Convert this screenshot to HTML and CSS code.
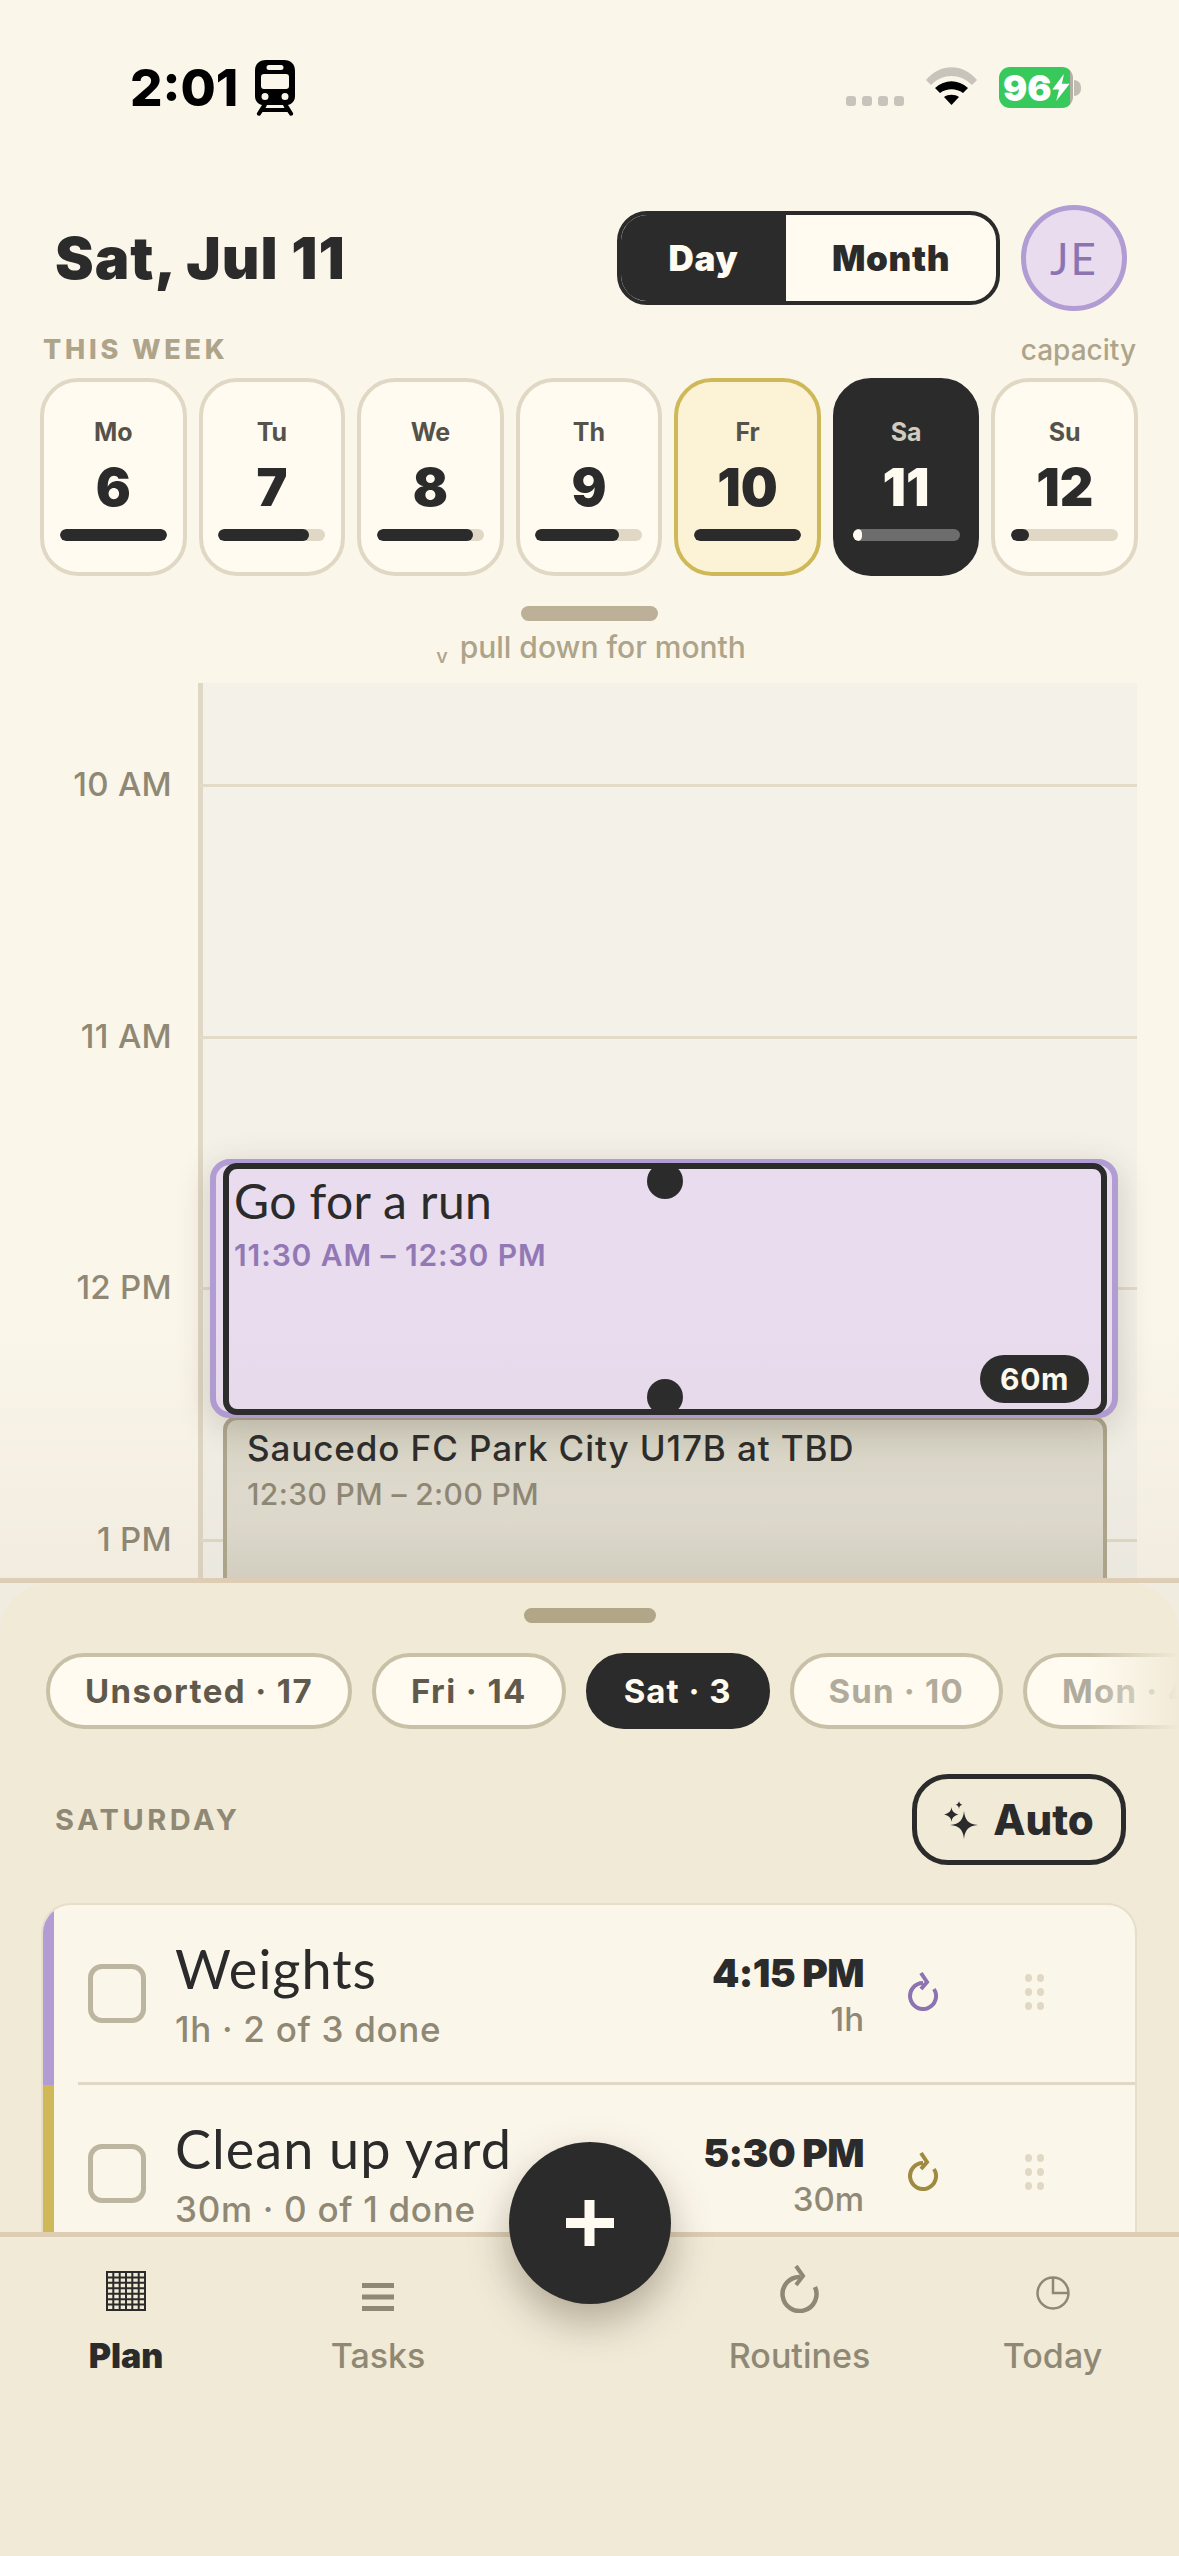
FILE: index.html
```html
<!DOCTYPE html>
<html lang="en">
<head>
  <meta charset="UTF-8" />
  <meta name="viewport" content="width=device-width, initial-scale=1.0" />
  <title>Plan</title>
  <link rel="stylesheet" href="styles.css">
</head>
<body>
  <div class="app">
    <div class="status">
      <div class="status-left">
        <span class="clock">2:01</span>
        <svg class="train" viewBox="0 0 40 56">
          <path fill="#000" fill-rule="evenodd" d="M11 0h18c7 0 11 4 11 11v25c0 5-3 8-7 9l5 8c1 2-2 4-3.500 2l-2-3H7.500l-2 3C4 57 1 55 2 53l5-8c-4-1-7-4-7-9V11C0 4 4 0 11 0zM14 5a2 2 0 0 0 0 5h12a2 2 0 0 0 0-5zM9 14c-2 0-3 1-3 3v9c0 2 1 3 3 3h22c2 0 3-1 3-3v-9c0-2-1-3-3-3zM10 33a3.500 3.500 0 1 0 0 7 3.500 3.500 0 0 0 0-7zM30 33a3.500 3.500 0 1 0 0 7 3.500 3.500 0 0 0 0-7zM12 45l-1.500 3h19L28 45z"/>
        </svg>
      </div>
      <div class="status-right">
        <div class="signal"><i></i><i></i><i></i><i></i></div>
        <svg class="wifi" viewBox="0 0 51 38">
          <path fill="#c9c4bb" d="M0 13C14 -4 37 -4 51 13l-5 5C34 6 17 6 5 18z"/>
          <path fill="#000" d="M9 21c10-9 23-9 33 0l-5 5c-7-5-16-5-23 0z"/>
          <path fill="#000" d="M18 30c4-3 11-3 15 0l-7.500 8z"/>
        </svg>
        <div class="battery">
          <div class="battery-fill">
            <span>96</span>
            <svg class="bolt" viewBox="0 0 18 28"><path fill="#fff" d="M12 0L0 16h7L4 28 18 10h-8z"/></svg>
          </div>
          <div class="battery-tip"></div>
        </div>
      </div>
    </div>

    <header class="top">
      <h1>Sat, Jul 11</h1>
      <div class="top-right">
        <div class="toggle">
          <span class="toggle-on">Day</span>
          <span class="toggle-off">Month</span>
        </div>
        <div class="avatar">JE</div>
      </div>
    </header>

    <div class="week-head">
      <span class="week-title">THIS WEEK</span>
      <span class="week-cap">capacity</span>
    </div>

    <div class="week">
      <div class="day"><span class="day-name">Mo</span><span class="day-num">6</span><div class="bar"><div class="bar-fill" style="width:100%"></div></div></div>
      <div class="day"><span class="day-name">Tu</span><span class="day-num">7</span><div class="bar"><div class="bar-fill" style="width:85%"></div></div></div>
      <div class="day"><span class="day-name">We</span><span class="day-num">8</span><div class="bar"><div class="bar-fill" style="width:90%"></div></div></div>
      <div class="day"><span class="day-name">Th</span><span class="day-num">9</span><div class="bar"><div class="bar-fill" style="width:78%"></div></div></div>
      <div class="day day-today"><span class="day-name">Fr</span><span class="day-num">10</span><div class="bar"><div class="bar-fill" style="width:100%"></div></div></div>
      <div class="day day-selected"><span class="day-name">Sa</span><span class="day-num">11</span><div class="bar"><div class="bar-fill" style="width:9%"></div></div></div>
      <div class="day"><span class="day-name">Su</span><span class="day-num">12</span><div class="bar"><div class="bar-fill" style="width:17%"></div></div></div>
    </div>

    <div class="pull">
      <div class="pull-handle"></div>
      <div class="pull-text"><small>v</small>pull down for month</div>
    </div>

    <div class="timeline">
      <div class="canvas"></div>
      <div class="hours">
        <div class="hour"><span>10 AM</span><div class="hour-line"></div></div>
        <div class="hour"><span>11 AM</span><div class="hour-line"></div></div>
        <div class="hour"><span>12 PM</span><div class="hour-line"></div></div>
        <div class="hour"><span>1 PM</span><div class="hour-line"></div></div>
      </div>

      <div class="event-busy">
        <div class="busy-title">Saucedo FC Park City U17B at TBD</div>
        <div class="busy-time">12:30 PM – 2:00 PM</div>
      </div>

      <div class="event-ring">
        <div class="event-sel">
          <div class="event-title hand">Go for a run</div>
          <div class="event-time">11:30 AM – 12:30 PM</div>
          <div class="grab grab-top"></div>
          <div class="grab grab-bottom"></div>
          <div class="event-len">60m</div>
        </div>
      </div>
      <div class="timeline-fade"></div>
    </div>

    <section class="sheet">
      <div class="sheet-inner">
        <div class="sheet-handle"></div>
        <div class="chips">
          <span class="chip">Unsorted · 17</span>
          <span class="chip">Fri · 14</span>
          <span class="chip chip-on">Sat · 3</span>
          <span class="chip chip-dim">Sun · 10</span>
          <span class="chip chip-dim">Mon · 4</span>
        </div>
        <div class="list-head">
          <span class="list-title">SATURDAY</span>
          <div class="auto">
            <svg class="sparkle" viewBox="0 0 34 38">
              <path fill="#2b2b2b" d="M20 10c1 9 4 13 14 14-10 1-13 5-14 14-1-9-4-13-14-14 10-1 13-5 14-14z"/>
              <path fill="#2b2b2b" d="M7.500 6c.5 4 2 6 7 7.500-5 1.500-6.500 3.500-7 7.500-.5-4-2-6-7.500-7.500C5.500 12 7 10 7.500 6z"/>
              <path fill="#2b2b2b" d="M15 0c.3 2 1 3 3.500 3.800C16 4.500 15.300 5.500 15 8c-.3-2.500-1-3.500-3.500-4.200C14 3 14.700 2 15 0z"/>
            </svg>
            <span>Auto</span>
          </div>
        </div>
        <div class="list">
          <div class="row row-purple">
            <div class="row-body">
              <div class="check"></div>
              <div class="row-main">
                <div class="row-title hand">Weights</div>
                <div class="row-sub">1h · 2 of 3 done</div>
              </div>
              <div class="row-when">
                <div class="row-time">4:15 PM</div>
                <div class="row-len">1h</div>
              </div>
              <svg class="repeat repeat-purple" viewBox="0 0 34 40"><path d="M27 18A13 13 0 1 1 16 12"/><path d="M14 2l6 9-6 7"/></svg>
              <div class="grip"><i></i><i></i><i></i><i></i><i></i><i></i></div>
            </div>
          </div>
          <div class="row row-yellow">
            <div class="row-body">
              <div class="check"></div>
              <div class="row-main">
                <div class="row-title hand">Clean up yard</div>
                <div class="row-sub">30m · 0 of 1 done</div>
              </div>
              <div class="row-when">
                <div class="row-time">5:30 PM</div>
                <div class="row-len">30m</div>
              </div>
              <svg class="repeat repeat-gold" viewBox="0 0 34 40"><path d="M27 18A13 13 0 1 1 16 12"/><path d="M14 2l6 9-6 7"/></svg>
              <div class="grip"><i></i><i></i><i></i><i></i><i></i><i></i></div>
            </div>
          </div>
        </div>
      </div>
    </section>

    <nav class="nav">
      <div class="tab tab-on">
        <svg class="tab-icon" viewBox="0 0 40 40">
          <path fill="none" stroke="#2b2b2b" stroke-width="2" d="M1 1h38v38H1zM7.300 1v38M13.700 1v38M20 1v38M26.300 1v38M32.700 1v38M1 6.400h38M1 11.800h38M1 17.200h38M1 22.800h38M1 28.200h38M1 33.600h38"/>
        </svg>
        <span>Plan</span>
      </div>
      <div class="tab">
        <svg class="tab-icon" viewBox="0 0 40 40">
          <path fill="#8f8875" d="M4 12h32v5H4zM4 23.500h32v5H4zM4 35h32v5H4z"/>
        </svg>
        <span>Tasks</span>
      </div>
      <div class="tab-gap"></div>
      <div class="tab">
        <svg class="tab-icon tab-icon-big" viewBox="0 0 44 48">
          <path fill="none" stroke="#8f8875" stroke-width="4.500" d="M37 22A17 17 0 1 1 22 12"/>
          <path fill="none" stroke="#8f8875" stroke-width="4" d="M18 1l7 10-7 9"/>
        </svg>
        <span>Routines</span>
      </div>
      <div class="tab">
        <svg class="tab-icon" viewBox="0 0 40 40">
          <path fill="none" stroke="#8f8875" stroke-width="2.500" d="M20 6.500a15.500 15.500 0 1 0 0 31 15.500 15.500 0 0 0 0-31zM20 6.500V22h15.500"/>
        </svg>
        <span>Today</span>
      </div>
    </nav>

    <div class="fab">
      <svg viewBox="0 0 48 46"><path fill="#fffbf0" d="M18.500 0h10v18H48v10H28.500v18h-10V28H0V18h18.500z"/></svg>
    </div>
  </div>
</body>
</html>
```

FILE: styles.css
```css
* {
  box-sizing: border-box;
}

body {
  margin: 0;
  font-family: Inter, "Liberation Sans", sans-serif;
  color: #2b2b2b;
  background: #fbf6ea;
}

.app {
  position: relative;
  width: 1179px;
  height: 2556px;
  overflow: hidden;
  display: flex;
  flex-direction: column;
}

.hand {
  font-family: Lato, "Open Sans", sans-serif;
  font-weight: 400;
}

/* status bar */
.status {
  height: 205px;
  flex: none;
  display: flex;
  justify-content: space-between;
  align-items: flex-start;
  padding: 60px 98px 0 130px;
}

.status-left {
  display: flex;
  align-items: center;
  gap: 17px;
}

.clock {
  font-size: 51px;
  font-weight: 800;
  color: #000;
  line-height: 56px;
}

.train {
  width: 40px;
  height: 56px;
}

.status-right {
  display: flex;
  align-items: flex-start;
  padding-top: 7px;
}

.signal {
  display: flex;
  gap: 6px;
  margin-top: 29px;
  margin-right: 22px;
}

.signal i {
  width: 10px;
  height: 10px;
  border-radius: 3px;
  background: #c9c4bb;
}

.wifi {
  width: 51px;
  height: 38px;
  margin-right: 22px;
}

.battery {
  display: flex;
  align-items: center;
}

.battery-fill {
  width: 74px;
  height: 41px;
  border-radius: 11px;
  background: linear-gradient(90deg, #37c95c 96%, #b5b0a6 96%);
  display: flex;
  align-items: center;
  justify-content: flex-start;
  gap: 0;
  padding-left: 4px;
  color: #fff;
  font-size: 36px;
  font-weight: 900;
}

.bolt {
  width: 18px;
  height: 27px;
  flex: none;
}

.battery-tip {
  width: 7px;
  height: 16px;
  margin-left: 1px;
  border-radius: 0 8px 8px 0;
  background: #c2bdb3;
}

/* header */
.top {
  height: 106px;
  flex: none;
  display: flex;
  justify-content: space-between;
  align-items: center;
  padding: 0 52px 0 55px;
}

.top h1 {
  margin: 0;
  font-size: 58px;
  font-weight: 900;
  letter-spacing: 1px;
}

.top-right {
  display: flex;
  align-items: center;
  gap: 21px;
}

.toggle {
  width: 383px;
  height: 94px;
  display: flex;
  border: 4px solid #2b2b2b;
  border-radius: 30px;
  overflow: hidden;
  background: #fffbf0;
  font-size: 35px;
  font-weight: 900;
}

.toggle span {
  display: flex;
  align-items: center;
  justify-content: center;
}

.toggle-on {
  width: 165px;
  background: #2b2b2b;
  color: #fffbf0;
  letter-spacing: 0.8px;
}

.toggle-off {
  flex: 1;
  letter-spacing: 0.6px;
}

.avatar {
  width: 106px;
  height: 106px;
  border: 5px solid #b19cd3;
  border-radius: 50%;
  background: #e8dcee;
  color: #8c74b0;
  display: flex;
  align-items: center;
  justify-content: center;
  font-family: Lato, sans-serif;
  font-size: 44px;
  letter-spacing: 2px;
}

/* week strip */
.week-head {
  height: 67px;
  flex: none;
  display: flex;
  justify-content: space-between;
  align-items: flex-end;
  padding: 0 43px 13px 43px;
  color: #ada48a;
}

.week-title {
  font-size: 27px;
  font-weight: 800;
  letter-spacing: 3.800px;
  line-height: 30px;
}

.week-cap {
  font-size: 28px;
  font-weight: 500;
  line-height: 30px;
}

.week {
  height: 198px;
  flex: none;
  display: grid;
  grid-template-columns: repeat(7, 1fr);
  gap: 12px;
  padding: 0 41px 0 40px;
}

.day {
  border: 4px solid #e0d8c4;
  border-radius: 38px;
  background: #fffbf0;
  display: flex;
  flex-direction: column;
  align-items: center;
  padding-top: 35px;
}

.day-name {
  font-size: 25px;
  font-weight: 700;
  line-height: 30px;
  color: #55524a;
}

.day-num {
  font-size: 52px;
  font-weight: 900;
  line-height: 60px;
  margin-top: 11px;
}

.bar {
  width: 107px;
  height: 12px;
  margin-top: 11px;
  border-radius: 6px;
  background: #e0d8c4;
  overflow: hidden;
}

.bar-fill {
  height: 100%;
  border-radius: 6px;
  background: #2b2b2b;
}

.day-today {
  background: #fcf3d6;
  border-color: #cfb858;
}

.day-selected {
  background: #2b2b2b;
  border-color: #2b2b2b;
  color: #fffbf0;
}

.day-selected .day-name {
  color: #d0ccc0;
}

.day-selected .bar {
  background: #6d6d6d;
}

.day-selected .bar-fill {
  background: #fffbf0;
}

.pull {
  height: 107px;
  flex: none;
  display: flex;
  flex-direction: column;
  align-items: center;
  padding-top: 30px;
}

.pull-handle {
  width: 137px;
  height: 15px;
  border-radius: 8px;
  background: #bcb098;
}

.pull-text {
  margin-top: 8px;
  font-size: 30px;
  font-weight: 500;
  line-height: 36px;
  color: #ada48a;
  padding-left: 3px;
}

.pull-text small {
  font-size: 20px;
  margin-right: 12px;
  position: relative;
  top: 5px;
}

/* day timeline */
.timeline {
  position: relative;
  height: 895px;
  flex: none;
  overflow: hidden;
}

.canvas {
  position: absolute;
  top: 0;
  bottom: 0;
  left: 198px;
  width: 939px;
  background: #f4f1e9;
  border-left: 5px solid #e0d8c4;
}

.hours {
  position: relative;
  padding-top: 101px;
}

.hour {
  height: 251.700px;
  display: flex;
  align-items: flex-start;
}

.hour span {
  width: 172px;
  text-align: right;
  font-size: 33px;
  font-weight: 500;
  line-height: 40px;
  margin-top: -20px;
  letter-spacing: 0.3px;
  color: #8f8875;
}

.hour-line {
  width: 937px;
  height: 3px;
  margin-left: 28px;
  background: #e3dbc6;
}

.event-ring {
  position: absolute;
  left: 210px;
  top: 476px;
  width: 908px;
  height: 259px;
  border: 6px solid #b19cd3;
  border-radius: 20px;
  background: #e8dcee;
  box-shadow: 0 8px 34px rgba(60, 50, 30, 0.2);
}

.event-sel {
  position: absolute;
  left: 7px;
  top: -2px;
  width: 884px;
  height: 252px;
  border: 6px solid #2b2b2b;
  border-radius: 14px;
  padding: 0 0 0 5px;
}

.event-title {
  font-size: 48px;
  line-height: 56px;
  margin-top: 4px;
  letter-spacing: 0.4px;
}

.event-time {
  margin-top: 8px;
  font-size: 30px;
  font-weight: 600;
  line-height: 36px;
  color: #9278b5;
  letter-spacing: 0.9px;
}

.grab {
  position: absolute;
  left: 418px;
  width: 36px;
  height: 36px;
  border-radius: 50%;
  background: #2b2b2b;
}

.grab-top {
  top: -6px;
}

.grab-bottom {
  bottom: -6px;
}

.event-len {
  position: absolute;
  right: 12px;
  bottom: 6px;
  width: 109px;
  height: 48px;
  border-radius: 24px;
  background: #2b2b2b;
  color: #fffbf0;
  font-size: 30px;
  font-weight: 700;
  display: flex;
  align-items: center;
  justify-content: center;
  letter-spacing: 0.6px;
}

.event-busy {
  position: absolute;
  left: 223px;
  top: 733px;
  width: 884px;
  height: 200px;
  border: 4px solid #b0a78f;
  border-radius: 14px;
  background: linear-gradient(180deg, #d8d4c5 0, #e2ded1 70px, #e2ded1 100px, #d9d5c7 160px);
  padding: 6px 0 0 20px;
}

.busy-title {
  font-size: 35px;
  font-weight: 500;
  line-height: 44px;
  letter-spacing: 0.9px;
}

.busy-time {
  margin-top: 6px;
  font-size: 30px;
  font-weight: 500;
  line-height: 36px;
  color: #8f8875;
  letter-spacing: 0.4px;
}

.timeline-fade {
  position: absolute;
  left: 0;
  right: 0;
  bottom: 0;
  height: 260px;
  background: linear-gradient(180deg, rgba(120, 110, 90, 0), rgba(120, 110, 90, 0.07));
  pointer-events: none;
}

/* bottom sheet */
.sheet {
  height: 654px;
  flex: none;
  border-top: 5px solid #dccdb4;
  background: #f0ece0;
  overflow: hidden;
}

.sheet-inner {
  height: 100%;
  border-radius: 50px 50px 0 0;
  background: #f1ead7;
  padding-top: 25px;
}

.sheet-handle {
  width: 132px;
  height: 15px;
  margin: 0 auto;
  border-radius: 8px;
  background: #b2a688;
}

.chips {
  position: relative;
  margin-top: 30px;
  display: flex;
  gap: 20px;
  padding-left: 46px;
  overflow: hidden;
}

.chips::after {
  content: "";
  position: absolute;
  top: 0;
  bottom: 0;
  right: 0;
  width: 90px;
  background: linear-gradient(90deg, rgba(241, 234, 215, 0), #f1ead7);
}

.chip {
  flex: none;
  height: 76px;
  padding: 0 35px;
  display: flex;
  align-items: center;
  border: 4px solid #c9c0a8;
  border-radius: 38px;
  background: #fffbf0;
  font-size: 33px;
  font-weight: 700;
  letter-spacing: 1.4px;
  color: #5f5a4c;
}

.chip-on {
  background: #2b2b2b;
  border-color: #2b2b2b;
  color: #fffbf0;
  letter-spacing: 1px;
  padding: 0 34px;
}

.chip-dim {
  color: #b0ab9c;
  letter-spacing: 1.2px;
}

.list-head {
  height: 91px;
  margin-top: 45px;
  display: flex;
  justify-content: space-between;
  align-items: center;
  padding: 0 53px 0 55px;
}

.list-title {
  font-size: 29px;
  font-weight: 700;
  letter-spacing: 3.500px;
  color: #8f8875;
}

.auto {
  width: 214px;
  height: 91px;
  display: flex;
  align-items: center;
  justify-content: center;
  gap: 15px;
  border: 5px solid #2b2b2b;
  border-radius: 36px;
  font-size: 42px;
  font-weight: 800;
}

.sparkle {
  width: 34px;
  height: 38px;
}

.list {
  margin: 38px 42px 0 41px;
  border: 2px solid #e6deca;
  border-radius: 30px;
  background: #fbf6ea;
  overflow: hidden;
}

.row {
  height: 180px;
  border-left: 11px solid #b19cd3;
  padding-left: 24px;
}

.row-yellow {
  border-left-color: #cfb858;
}

.row-body {
  height: 100%;
  display: flex;
  align-items: center;
  padding-left: 10px;
  padding-right: 91px;
  border-bottom: 3px solid #e0d8c4;
}

.check {
  width: 58px;
  height: 59px;
  flex: none;
  border: 5px solid #bcb5a0;
  border-radius: 14px;
}

.row-main {
  flex: 1;
  margin-left: 29px;
}

.row-title {
  font-size: 54px;
  line-height: 62px;
  letter-spacing: 1px;
}

.row-sub {
  margin-top: 8px;
  font-size: 35px;
  font-weight: 500;
  line-height: 42px;
  letter-spacing: 0.7px;
  color: #8f8875;
}

.row-when {
  text-align: right;
}

.row-time {
  font-size: 39px;
  font-weight: 900;
  line-height: 48px;
  letter-spacing: -0.6px;
}

.row-len {
  margin-top: 2px;
  font-size: 33px;
  font-weight: 500;
  line-height: 40px;
  color: #8f8875;
}

.repeat {
  width: 34px;
  height: 40px;
  flex: none;
  margin: -5px 0 0 43px;
  fill: none;
  stroke-width: 4;
}

.repeat-purple {
  stroke: #8c74b0;
}

.repeat-gold {
  stroke: #9f8a42;
}

.grip {
  width: 19px;
  flex: none;
  margin: -3px 0 0 84px;
  display: grid;
  grid-template-columns: 7px 7px;
  gap: 6px 5px;
}

.grip i {
  height: 8px;
  border-radius: 50%;
  background: #e0d8c4;
}

/* tab bar */
.nav {
  height: 324px;
  flex: none;
  border-top: 5px solid #dccdb4;
  background: #f1ead7;
  display: grid;
  grid-template-columns: 252px 252px 169px 253px 253px;
  align-items: start;
}

.tab {
  display: flex;
  flex-direction: column;
  align-items: center;
  color: #8f8875;
  font-size: 34px;
  font-weight: 500;
}

.tab-icon {
  width: 40px;
  height: 40px;
  margin-top: 34px;
  margin-bottom: 24px;
}

.tab-icon-big {
  width: 44px;
  height: 48px;
  margin-top: 28px;
  margin-bottom: 22px;
}

.tab-on {
  color: #2b2b2b;
  font-weight: 900;
}

.fab {
  position: absolute;
  left: 509px;
  top: 2142px;
  width: 162px;
  height: 162px;
  border-radius: 50%;
  background: #2b2b2b;
  box-shadow: 0 18px 40px rgba(60, 50, 30, 0.35);
  display: flex;
  align-items: center;
  justify-content: center;
}

.fab svg {
  width: 48px;
  height: 46px;
}
```
